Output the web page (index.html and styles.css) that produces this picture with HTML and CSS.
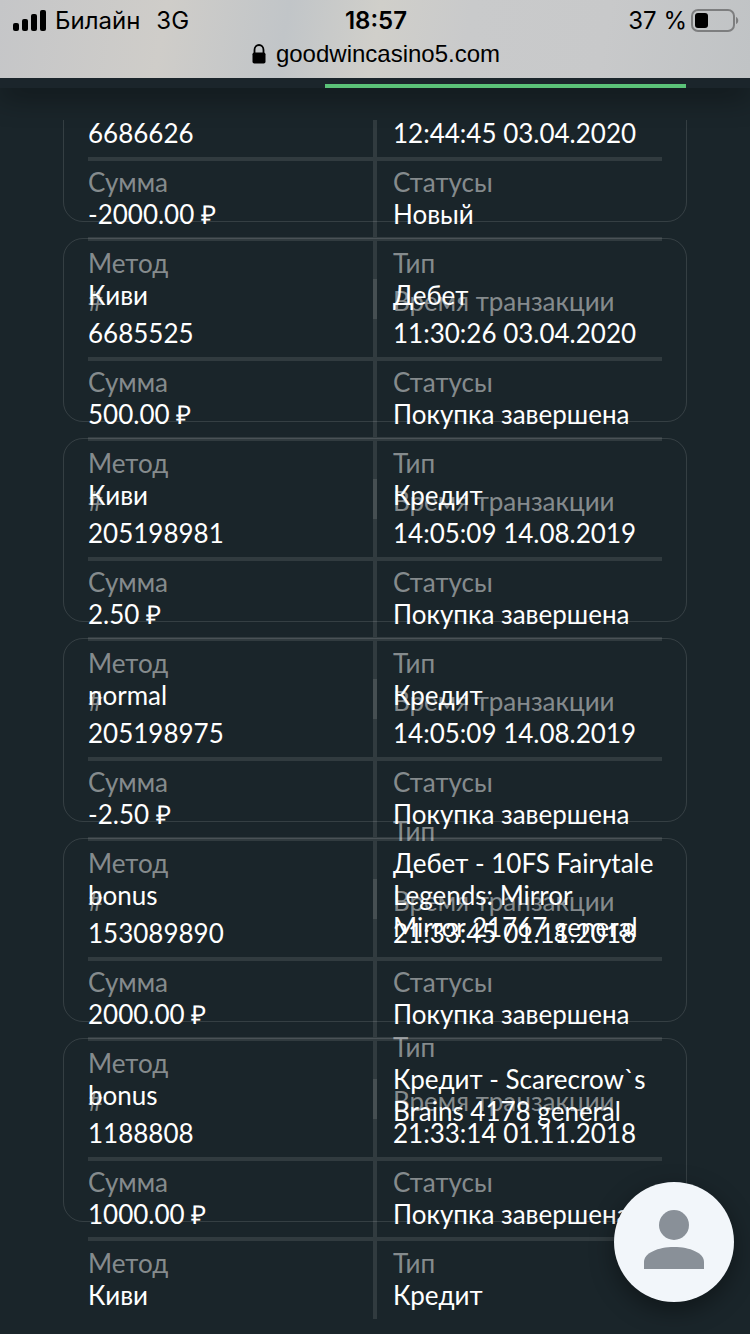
FILE: index.html
```html
<!DOCTYPE html>
<html lang="ru">
<head>
  <meta charset="UTF-8">
  <meta name="viewport" content="width=device-width, initial-scale=1.0">
  <title>История транзакций</title>
  <link rel="stylesheet" href="styles.css">
</head>
<body>
  <header>
    <div class="status">
      <div class="carrier">
        <svg width="34" height="22" viewBox="0 0 34 22">
          <rect x="0" y="13" width="6" height="8" rx="2"/>
          <rect x="9" y="9" width="6" height="12" rx="2"/>
          <rect x="18" y="4" width="6" height="17" rx="2"/>
          <rect x="27" y="0" width="6" height="21" rx="2"/>
        </svg>
        <span>Билайн</span>
        <span class="network">3G</span>
      </div>
      <div class="time">18:57</div>
      <div class="battery">
        <span>37 %</span>
        <svg width="48" height="24" viewBox="0 0 48 24">
          <rect x="1" y="1" width="42" height="21" rx="6" fill="none" stroke="#7d7e7f" stroke-width="2"/>
          <rect x="4" y="4" width="13" height="15" rx="3"/>
          <path d="M45 8c3 1 3 6 0 7z" fill="#7d7e7f"/>
        </svg>
      </div>
    </div>
    <div class="address">
      <svg width="14" height="20" viewBox="0 0 14 20">
        <path d="M2.5 9V6a4.5 5 0 0 1 9 0v3" fill="none" stroke="#000" stroke-width="1.8"/>
        <rect x="0.5" y="8.5" width="13" height="11" rx="1.8"/>
      </svg>
      <span>goodwincasino5.com</span>
    </div>
  </header>
  <div class="tabs"><div class="tab-line"></div></div>

  <main class="list">
    <dl class="card">
      <div class="cell"><dt>#</dt><dd>6686626</dd></div>
      <div class="cell"><dt>Время транзакции</dt><dd>12:44:45 03.04.2020</dd></div>
      <div class="cell"><dt>Сумма</dt><dd>-2000.00 ₽</dd></div>
      <div class="cell"><dt>Статусы</dt><dd>Новый</dd></div>
      <div class="cell"><dt>Метод</dt><dd>Киви</dd></div>
      <div class="cell"><dt>Тип</dt><dd>Дебет</dd></div>
    </dl>
    <dl class="card">
      <div class="cell"><dt>#</dt><dd>6685525</dd></div>
      <div class="cell"><dt>Время транзакции</dt><dd>11:30:26 03.04.2020</dd></div>
      <div class="cell"><dt>Сумма</dt><dd>500.00 ₽</dd></div>
      <div class="cell"><dt>Статусы</dt><dd>Покупка завершена</dd></div>
      <div class="cell"><dt>Метод</dt><dd>Киви</dd></div>
      <div class="cell"><dt>Тип</dt><dd>Кредит</dd></div>
    </dl>
    <dl class="card">
      <div class="cell"><dt>#</dt><dd>205198981</dd></div>
      <div class="cell"><dt>Время транзакции</dt><dd>14:05:09 14.08.2019</dd></div>
      <div class="cell"><dt>Сумма</dt><dd>2.50 ₽</dd></div>
      <div class="cell"><dt>Статусы</dt><dd>Покупка завершена</dd></div>
      <div class="cell"><dt>Метод</dt><dd>normal</dd></div>
      <div class="cell"><dt>Тип</dt><dd>Кредит</dd></div>
    </dl>
    <dl class="card">
      <div class="cell"><dt>#</dt><dd>205198975</dd></div>
      <div class="cell"><dt>Время транзакции</dt><dd>14:05:09 14.08.2019</dd></div>
      <div class="cell"><dt>Сумма</dt><dd>-2.50 ₽</dd></div>
      <div class="cell"><dt>Статусы</dt><dd>Покупка завершена</dd></div>
      <div class="cell"><dt>Метод</dt><dd>bonus</dd></div>
      <div class="cell"><dt>Тип</dt><dd>Дебет - 10FS Fairytale Legends: Mirror Mirror&nbsp;21767 general</dd></div>
    </dl>
    <dl class="card">
      <div class="cell"><dt>#</dt><dd>153089890</dd></div>
      <div class="cell"><dt>Время транзакции</dt><dd>21:33:45 01.11.2018</dd></div>
      <div class="cell"><dt>Сумма</dt><dd>2000.00 ₽</dd></div>
      <div class="cell"><dt>Статусы</dt><dd>Покупка завершена</dd></div>
      <div class="cell"><dt>Метод</dt><dd>bonus</dd></div>
      <div class="cell"><dt>Тип</dt><dd>Кредит - Scarecrow`s Brains 4178 general</dd></div>
    </dl>
    <dl class="card">
      <div class="cell"><dt>#</dt><dd>1188808</dd></div>
      <div class="cell"><dt>Время транзакции</dt><dd>21:33:14 01.11.2018</dd></div>
      <div class="cell"><dt>Сумма</dt><dd>1000.00 ₽</dd></div>
      <div class="cell"><dt>Статусы</dt><dd>Покупка завершена</dd></div>
      <div class="cell"><dt>Метод</dt><dd>Киви</dd></div>
      <div class="cell"><dt>Тип</dt><dd>Кредит</dd></div>
    </dl>
  </main>

  <button class="profile" type="button" aria-label="Профиль">
    <svg width="60" height="60" viewBox="0 0 60 60">
      <circle cx="30" cy="15" r="15"/>
      <path d="M0 59V52C0 43 14 37 30 37s30 6 30 15v7z"/>
    </svg>
  </button>
</body>
</html>
```

FILE: styles.css
```css
* { box-sizing: border-box; margin: 0; padding: 0; }

body {
  display: flex;
  flex-direction: column;
  height: 100vh;
  overflow: hidden;
  background-color: #1a252a;
  color: #fff;
  font-family: Lato, "Open Sans", sans-serif;
  font-size: 26px;
  line-height: 32px;
}

/* Шапка браузера */
header {
  position: relative;
  z-index: 2;
  height: 78px;
  padding: 5px 11px 0 13px;
  background: linear-gradient(100deg, #c5c6c8 0%, #cfcdc9 22%, #c1c5c8 38%, #d0cfca 50%, #c9cacb 62%, #c8c9ca 80%, #c0c3c5 100%);
  color: #000;
  font-family: Inter, sans-serif;
  font-size: 24px;
}
.status { display: grid; grid-template-columns: 1fr auto 1fr; align-items: center; height: 32px; }
.carrier { display: flex; align-items: center; gap: 8px; }
.network { margin-left: 8px; }
.time { font-weight: 600; }
.battery { display: flex; align-items: center; justify-content: flex-end; gap: 4px; }
.address {
  display: flex;
  align-items: center;
  justify-content: center;
  gap: 10px;
  height: 34px;
  font-family: "Liberation Sans", sans-serif;
}

.tabs {
  position: relative;
  z-index: 1;
  display: flex;
  align-items: flex-end;
  justify-content: flex-end;
  flex: none;
  height: 10px;
  padding: 0 64px;
  background-color: #1b252b;
  box-shadow: 0 4px 30px rgba(0, 0, 0, 0.8);
}
.tab-line { width: 58%; height: 4px; background-color: #5bc278; }

/* Список транзакций, прокручен вниз */
.list {
  flex: 1;
  display: flex;
  flex-direction: column;
  justify-content: flex-end;
  gap: 16px;
  min-height: 0;
  margin-top: 32px;
  padding: 0 63px 112px;
  overflow: hidden;
}

.card {
  flex: none;
  display: grid;
  grid-template-columns: 1fr 1fr;
  grid-template-rows: 80px 80px 80px;
  height: 184px;
  padding: 40px 24px;
  border: 1px solid rgba(255, 255, 255, 0.12);
  border-radius: 20px;
}

.cell {
  display: flex;
  flex-direction: column;
  justify-content: center;
  min-width: 0;
  padding-bottom: 2px;
  border: 0 solid rgba(255, 255, 255, 0.1);
  border-top-width: 2px;
  border-bottom-width: 2px;
}
.cell:nth-child(odd) { border-right-width: 2px; }
.cell:nth-child(even) { border-left-width: 2px; padding-left: 16px; }
.cell:nth-child(-n+2) { border-top-width: 0; }
.cell:nth-child(n+5) { border-bottom-width: 0; }

dt { color: rgba(255, 255, 255, 0.48); }

.profile {
  position: fixed;
  right: 16px;
  bottom: 32px;
  z-index: 3;
  display: flex;
  align-items: center;
  justify-content: center;
  width: 120px;
  height: 120px;
  padding-bottom: 4px;
  border: none;
  border-radius: 50%;
  background-color: #f2f6fa;
  box-shadow: 0 8px 24px rgba(0, 0, 0, 0.4);
  cursor: pointer;
}
.profile svg { fill: #899098; }
```
